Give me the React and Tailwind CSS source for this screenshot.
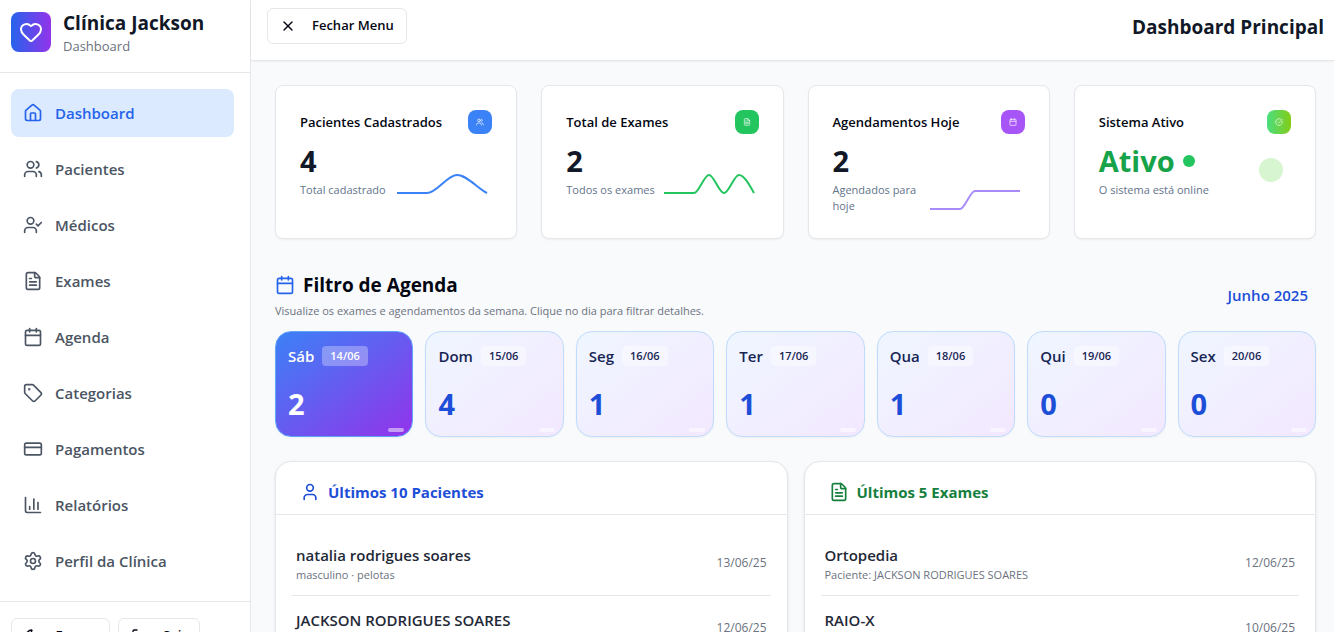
import React from "react";
import {
  Heart, House, Users, UserCheck, FileText, Calendar, Tag, CreditCard,
  ChartColumn, Settings, Moon, LogOut, X, User, CircleCheckBig,
} from "lucide-react";

const navItems = [
  { label: "Dashboard", icon: House, active: true },
  { label: "Pacientes", icon: Users },
  { label: "Médicos", icon: UserCheck },
  { label: "Exames", icon: FileText },
  { label: "Agenda", icon: Calendar },
  { label: "Categorias", icon: Tag },
  { label: "Pagamentos", icon: CreditCard },
  { label: "Relatórios", icon: ChartColumn },
  { label: "Perfil da Clínica", icon: Settings },
];

const stats = [
  {
    title: "Pacientes Cadastrados", value: "4", caption: "Total cadastrado",
    icon: Users, box: "bg-[#3b82f6]", stroke: "#3b82f6",
    path: "M5 23H35C45 23 55 5 65 5C75 5 85 18 95 23",
  },
  {
    title: "Total de Exames", value: "2", caption: "Todos os exames",
    icon: FileText, box: "bg-[#22c55e]", stroke: "#22c55e",
    path: "M5 23H35C40 23 45 5 50 5C55 5 60 23 65 23C70 23 75 5 80 5C85 5 90 14 95 23",
  },
  {
    title: "Agendamentos Hoje", value: "2", caption: "Agendados para hoje", wrap: true,
    icon: Calendar, box: "bg-[#a855f7]", stroke: "#a78bfa",
    path: "M5 23H35C40 23 45 5 50 5H95",
  },
];

const days = [
  { name: "Sáb", date: "14/06", count: 2, active: true },
  { name: "Dom", date: "15/06", count: 4 },
  { name: "Seg", date: "16/06", count: 1 },
  { name: "Ter", date: "17/06", count: 1 },
  { name: "Qua", date: "18/06", count: 1 },
  { name: "Qui", date: "19/06", count: 0 },
  { name: "Sex", date: "20/06", count: 0 },
];

const patients = [
  { name: "natalia rodrigues soares", detail: "masculino · pelotas", date: "13/06/25" },
  { name: "JACKSON RODRIGUES SOARES", detail: "masculino · pelotas", date: "12/06/25" },
];

const exams = [
  { name: "Ortopedia", detail: "Paciente: JACKSON RODRIGUES SOARES", date: "12/06/25" },
  { name: "RAIO-X", detail: "Paciente: JACKSON RODRIGUES SOARES", date: "10/06/25" },
];

function Sidebar() {
  return (
    <aside className="flex w-[251px] shrink-0 flex-col border-r border-[#e5e7eb] bg-white">
      <div className="flex h-[73px] shrink-0 items-start gap-3 border-b border-[#e5e7eb] pt-3 pl-[11px]">
        <div className="flex size-10 items-center justify-center rounded-lg bg-[linear-gradient(to_right,#2563eb,#9333ea)]">
          <Heart className="size-6 text-white" />
        </div>
        <div className="-mt-1">
          <p className="text-[19px] leading-[30px] font-bold text-[#111827]">Clínica Jackson</p>
          <p className="text-[13px] leading-4 text-[#6b7280]">Dashboard</p>
        </div>
      </div>
      <nav className="flex shrink-0 flex-col gap-2 pt-4 pr-4 pb-4 pl-[11px]">
        {navItems.map(({ label, icon: Icon, active }) => (
          <a
            key={label}
            href="#"
            className={`flex h-12 items-center gap-3 rounded-lg px-3 text-[15px] font-semibold ${active ? "bg-[#dbeafe] text-[#2563eb]" : "text-[#4b5563]"}`}
          >
            <Icon className="size-5" />
            {label}
          </a>
        ))}
      </nav>
      <div className="flex shrink-0 gap-2 border-t border-[#e5e7eb] pt-4 pb-4 pl-[11px]">
        <button className="flex h-9 w-[99px] items-center justify-center gap-4 rounded-md border border-[#e5e7eb] text-[13px] font-semibold text-[#030712]">
          <Moon className="size-4" />
          Escuro
        </button>
        <button className="flex h-9 w-[82px] items-center justify-center gap-4 rounded-md border border-[#e5e7eb] text-[13px] font-semibold text-[#030712]">
          <LogOut className="size-4" />
          Sair
        </button>
      </div>
    </aside>
  );
}

function StatCard({ title, icon: Icon, box, children }) {
  return (
    <section className="rounded-lg border border-[#e5e7eb] bg-white p-6 shadow-xs">
      <div className="flex items-center justify-between pb-2">
        <h3 className="text-[13px] leading-6 font-semibold whitespace-nowrap text-[#030712]">{title}</h3>
        <span className={`flex size-6 items-center justify-center rounded-lg ${box}`}>
          <Icon className="size-2 text-white" />
        </span>
      </div>
      {children}
    </section>
  );
}

function Panel({ title, icon: Icon, color, rows }) {
  return (
    <section className="rounded-2xl border border-[#e5e7eb] bg-white shadow-sm">
      <div className={`flex items-center gap-2 border-b border-[#e5e7eb] px-6 pt-5 pb-3 ${color}`}>
        <Icon className="size-5" />
        <h3 className="text-[15px] leading-5 font-bold">{title}</h3>
      </div>
      <ul className="p-4">
        {rows.map((row) => (
          <li key={row.name} className="flex items-center justify-between border-b border-[#e5e7eb] px-1 py-3">
            <div>
              <p className="text-[15px] leading-6 font-semibold text-[#1f2937]">{row.name}</p>
              <p className="text-[11px] leading-4 text-[#6b7280]">{row.detail}</p>
            </div>
            <time className="text-xs text-[#6b7280]">{row.date}</time>
          </li>
        ))}
      </ul>
    </section>
  );
}

export default function App() {
  return (
    <div className="flex h-screen overflow-hidden bg-[#f9fafb] font-['Open_Sans','Noto_Sans',sans-serif]">
      <Sidebar />
      <div className="flex min-w-0 flex-1 flex-col">
        <header className="flex h-[61px] shrink-0 items-start justify-between border-b border-[#e5e7eb] bg-white pt-2 pr-[10px] pl-4 shadow-xs">
          <button className="flex h-9 items-center gap-4 rounded-md border border-[#e5e7eb] px-3 text-[13px] font-semibold text-[#030712]">
            <X className="size-4" />
            Fechar Menu
          </button>
          <h1 className="pt-1 text-[19px] leading-[30px] font-bold text-[#111827]">Dashboard Principal</h1>
        </header>
        <main className="flex-1 overflow-y-auto pt-6 pr-[18px] pb-6 pl-6 [scrollbar-width:none]">
          <div className="grid grid-cols-4 gap-6">
            {stats.map((s) => (
              <StatCard key={s.title} title={s.title} icon={s.icon} box={s.box}>
                <div className="flex items-end justify-between">
                  <div>
                    <p className="text-[29px] leading-[38px] font-bold text-[#111827]">{s.value}</p>
                    <p className={`mt-0.5 text-[11px] leading-4 text-[#64748b] ${s.wrap ? "" : "whitespace-nowrap"}`}>{s.caption}</p>
                  </div>
                  <svg className="h-7 w-[100px] shrink-0" viewBox="0 0 100 28" fill="none" aria-hidden="true">
                    <path d={s.path} stroke={s.stroke} strokeWidth="2" />
                  </svg>
                </div>
              </StatCard>
            ))}
            <StatCard title="Sistema Ativo" icon={CircleCheckBig} box="bg-[linear-gradient(to_right,#4ade80,#84cc16)]">
              <div className="flex items-start justify-between">
                <div>
                  <p className="flex items-center gap-2 text-[29px] leading-[38px] font-bold text-[#16a34a]">
                    Ativo
                    <span className="size-3 rounded-full bg-[#22c55e]" />
                  </p>
                  <p className="mt-0.5 text-[11px] leading-4 text-[#64748b]">O sistema está online</p>
                </div>
                <span className="mt-4 mr-2 size-6 rounded-full bg-[#d7f5d0]" />
              </div>
            </StatCard>
          </div>

          <div className="mt-8 mb-3 flex items-center justify-between">
            <div>
              <h2 className="flex items-center gap-2 text-[19px] leading-7 font-bold text-[#030712]">
                <Calendar className="size-5 text-[#2563eb]" />
                Filtro de Agenda
              </h2>
              <p className="mt-1 text-[11px] leading-4 text-[#6b7280]">
                Visualize os exames e agendamentos da semana. Clique no dia para filtrar detalhes.
              </p>
            </div>
            <p className="pr-2 text-[15px] font-semibold text-[#1d4ed8]">Junho 2025</p>
          </div>

          <div className="grid grid-cols-7 gap-3">
            {days.map((d) => (
              <button
                key={d.name}
                className={`relative rounded-2xl border px-3 pt-3 pb-[14px] text-left shadow-xs ${d.active ? "border-[#60a5fa] bg-[linear-gradient(to_bottom_right,#3b82f6,#9333ea)] bg-origin-border text-white" : "border-[#bfdbfe] bg-[linear-gradient(to_bottom_right,#eff6ff,#f3e8ff)] text-[#172554]"}`}
              >
                <span className="flex h-6 items-center gap-2">
                  <span className="text-[15px] font-semibold">{d.name}</span>
                  <span className={`rounded px-2 text-[11px] leading-5 font-semibold ${d.active ? "bg-white/30" : "bg-white/40"}`}>{d.date}</span>
                </span>
                <span className={`mt-[18px] block text-[29px] leading-9 font-bold ${d.active ? "text-white" : "text-[#1d4ed8]"}`}>{d.count}</span>
                <span className="absolute right-2 bottom-1 h-1 w-4 rounded-full bg-white/50" />
              </button>
            ))}
          </div>

          <div className="mt-6 grid grid-cols-2 gap-4">
            <Panel title="Últimos 10 Pacientes" icon={User} color="text-[#1d4ed8]" rows={patients} />
            <Panel title="Últimos 5 Exames" icon={FileText} color="text-[#15803d]" rows={exams} />
          </div>
        </main>
      </div>
    </div>
  );
}
